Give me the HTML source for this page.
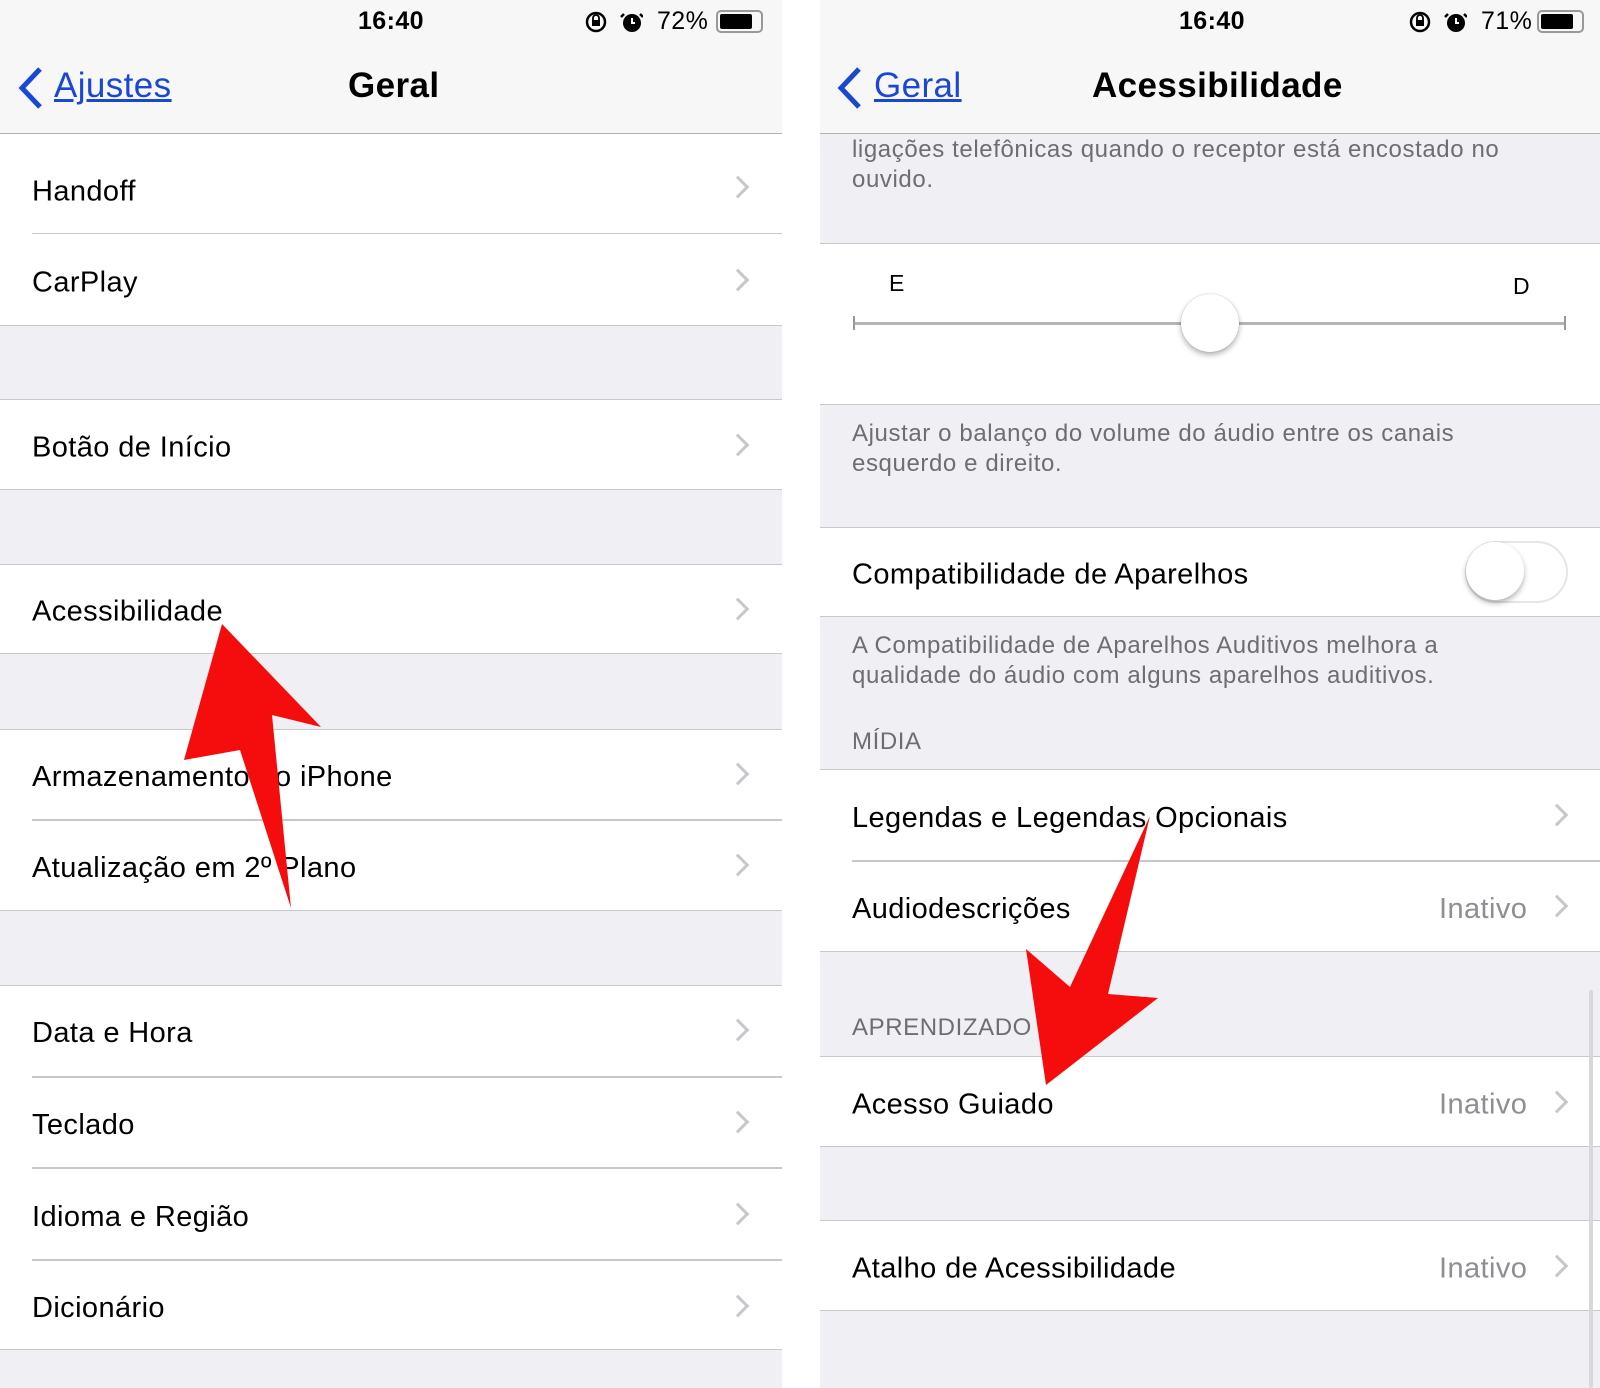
<!DOCTYPE html>
<html><head><meta charset="utf-8"><style>
*{margin:0;padding:0;box-sizing:border-box}
body{width:1600px;height:1388px;background:#fff;position:relative;overflow:hidden;font-family:"Liberation Sans",sans-serif;color:#000;letter-spacing:0.4px}
.a{position:absolute}
.gray{background:#efeff4}
.row{position:absolute;background:#fff;font-size:29px;border-bottom:1.5px solid #c8c7cc}
.row span{position:absolute;top:calc(50% + 3px);transform:translateY(-50%)}
.chev{position:absolute;width:16px;height:16px;border-right:3px solid #c7c7cc;border-top:3px solid #c7c7cc;transform:translateY(-50%) rotate(45deg)}
.ft{position:absolute;font-size:24px;color:#6d6d72;line-height:30px;letter-spacing:0.6px}
.line{position:absolute;height:1.5px;background:#c8c7cc}
</style></head><body>
<!-- LEFT -->
<div class="a gray" style="left:0;top:0;width:782px;height:1388px"></div>
<div class="a" style="left:0;top:0;width:782px;height:134px;background:#f7f7f7;border-bottom:1.5px solid #b2b2b2"></div>
<div class="a" style="left:358px;top:7px;font-size:25px;font-weight:bold">16:40</div>
<svg class="a" style="left:583px;top:9px" width="60" height="26"><circle cx="13" cy="13" r="9" fill="none" stroke="#000" stroke-width="2.5"/><rect x="9" y="11" width="8" height="6" fill="#000"/><path d="M10 11 v-2 a3 3 0 0 1 6 0 v2" fill="none" stroke="#000" stroke-width="1.8"/><circle cx="49" cy="14" r="9" fill="#000"/><path d="M41 5 l-3 3 M57 5 l3 3" stroke="#000" stroke-width="2.5"/><path d="M49 9 v5 h3" stroke="#fff" stroke-width="2" fill="none"/></svg>
<div class="a" style="left:657px;top:7px;font-size:25px">72%</div>
<div class="a" style="left:716px;top:10px;width:47px;height:23px;border:2px solid #999;border-radius:5px"><div style="margin:2px;width:32px;height:15px;background:#000;border-radius:2px"></div></div>
<svg class="a" style="left:16px;top:66px" width="30" height="44"><path d="M24 3 L6 22 L24 41" stroke="#1a47d4" stroke-width="5" fill="none"/></svg>
<div class="a" style="left:54px;top:66px;font-size:35px;color:#1a47d4;text-decoration:underline">Ajustes</div>
<div class="a" style="left:348px;top:66px;font-size:35px;font-weight:bold">Geral</div>

<div class="row" style="left:0;top:134px;width:782px;height:100px;border:none"><span style="left:32px;top:calc(50% + 8px)">Handoff</span><i class="chev" style="left:730px;top:53%"></i></div>
<div class="line" style="left:32px;top:233px;width:750px"></div>
<div class="row" style="left:0;top:234px;width:782px;height:92px"><span style="left:32px">CarPlay</span><i class="chev" style="left:730px;top:50%"></i></div>
<div class="row" style="left:0;top:399px;width:782px;height:91px;border-top:1.5px solid #c8c7cc"><span style="left:32px">Botão de Início</span><i class="chev" style="left:730px;top:50%"></i></div>
<div class="row" style="left:0;top:564px;width:782px;height:90px;border-top:1.5px solid #c8c7cc"><span style="left:32px">Acessibilidade</span><i class="chev" style="left:730px;top:50%"></i></div>
<div class="row" style="left:0;top:729px;width:782px;height:182px;border-top:1.5px solid #c8c7cc"></div>
<div class="a" style="left:32px;top:761px;font-size:29px">Armazenamento do iPhone</div>
<i class="chev" style="left:730px;top:774px"></i>
<div class="line" style="left:32px;top:819px;width:750px"></div>
<div class="a" style="left:32px;top:852px;font-size:29px">Atualização em 2º Plano</div>
<i class="chev" style="left:730px;top:865px"></i>
<div class="row" style="left:0;top:985px;width:782px;height:365px;border-top:1.5px solid #c8c7cc"></div>
<div class="a" style="left:32px;top:1017px;font-size:29px">Data e Hora</div><i class="chev" style="left:730px;top:1030px"></i>
<div class="line" style="left:32px;top:1076px;width:750px"></div>
<div class="a" style="left:32px;top:1109px;font-size:29px">Teclado</div><i class="chev" style="left:730px;top:1122px"></i>
<div class="line" style="left:32px;top:1167px;width:750px"></div>
<div class="a" style="left:32px;top:1201px;font-size:29px">Idioma e Região</div><i class="chev" style="left:730px;top:1214px"></i>
<div class="line" style="left:32px;top:1259px;width:750px"></div>
<div class="a" style="left:32px;top:1292px;font-size:29px">Dicionário</div><i class="chev" style="left:730px;top:1306px"></i>

<!-- RIGHT -->
<div class="a gray" style="left:820px;top:0;width:780px;height:1388px"></div>
<div class="a" style="left:820px;top:0;width:780px;height:134px;background:#f7f7f7;border-bottom:1.5px solid #b2b2b2"></div>
<div class="a" style="left:1179px;top:7px;font-size:25px;font-weight:bold">16:40</div>
<svg class="a" style="left:1407px;top:9px" width="60" height="26"><circle cx="13" cy="13" r="9" fill="none" stroke="#000" stroke-width="2.5"/><rect x="9" y="11" width="8" height="6" fill="#000"/><path d="M10 11 v-2 a3 3 0 0 1 6 0 v2" fill="none" stroke="#000" stroke-width="1.8"/><circle cx="49" cy="14" r="9" fill="#000"/><path d="M41 5 l-3 3 M57 5 l3 3" stroke="#000" stroke-width="2.5"/><path d="M49 9 v5 h3" stroke="#fff" stroke-width="2" fill="none"/></svg>
<div class="a" style="left:1481px;top:7px;font-size:25px">71%</div>
<div class="a" style="left:1537px;top:10px;width:47px;height:23px;border:2px solid #999;border-radius:5px"><div style="margin:2px;width:32px;height:15px;background:#000;border-radius:2px"></div></div>
<svg class="a" style="left:835px;top:66px" width="30" height="44"><path d="M24 3 L6 22 L24 41" stroke="#1a47d4" stroke-width="5" fill="none"/></svg>
<div class="a" style="left:874px;top:66px;font-size:35px;color:#1a47d4;text-decoration:underline">Geral</div>
<div class="a" style="left:1092px;top:66px;font-size:35px;font-weight:bold">Acessibilidade</div>
<div class="ft" style="left:852px;top:135px">ligações telefônicas quando o receptor está encostado no<br>ouvido.</div>
<div class="row" style="left:820px;top:243px;width:780px;height:162px;border-top:1.5px solid #c8c7cc"></div>
<div class="a" style="left:889px;top:270px;font-size:23px">E</div>
<div class="a" style="left:1513px;top:273px;font-size:23px">D</div>
<div class="a" style="left:854px;top:322px;width:711px;height:3px;background:#b5b5b5"></div>
<div class="a" style="left:853px;top:316px;width:2px;height:14px;background:#999"></div>
<div class="a" style="left:1564px;top:316px;width:2px;height:14px;background:#999"></div>
<div class="a" style="left:1181px;top:294px;width:58px;height:58px;border-radius:50%;background:#fff;box-shadow:0 3px 6px rgba(0,0,0,.3),0 0 1px rgba(0,0,0,.3)"></div>
<div class="ft" style="left:852px;top:419px">Ajustar o balanço do volume do áudio entre os canais<br>esquerdo e direito.</div>
<div class="row" style="left:820px;top:527px;width:780px;height:90px;border-top:1.5px solid #c8c7cc"><span style="left:32px">Compatibilidade de Aparelhos</span></div>
<div class="a" style="left:1465px;top:541px;width:103px;height:62px;border-radius:31px;border:2px solid #e5e5ea;background:#fff"></div>
<div class="a" style="left:1466px;top:542px;width:58px;height:58px;border-radius:50%;background:#fff;box-shadow:0 3px 6px rgba(0,0,0,.3)"></div>
<div class="ft" style="left:852px;top:631px">A Compatibilidade de Aparelhos Auditivos melhora a<br>qualidade do áudio com alguns aparelhos auditivos.</div>
<div class="ft" style="left:852px;top:727px">MÍDIA</div>
<div class="row" style="left:820px;top:769px;width:780px;height:183px;border-top:1.5px solid #c8c7cc"></div>
<div class="a" style="left:852px;top:802px;font-size:29px">Legendas e Legendas Opcionais</div><i class="chev" style="left:1549px;top:815px"></i>
<div class="line" style="left:852px;top:860px;width:748px"></div>
<div class="a" style="left:852px;top:893px;font-size:29px">Audiodescrições</div>
<div class="a" style="left:1439px;top:893px;font-size:29px;color:#8e8e93">Inativo</div><i class="chev" style="left:1549px;top:906px"></i>
<div class="ft" style="left:852px;top:1013px">APRENDIZADO</div>
<div class="row" style="left:820px;top:1056px;width:780px;height:91px;border-top:1.5px solid #c8c7cc"><span style="left:32px">Acesso Guiado</span><span style="left:619px;color:#8e8e93">Inativo</span><i class="chev" style="left:729px;top:50%"></i></div>
<div class="row" style="left:820px;top:1220px;width:780px;height:91px;border-top:1.5px solid #c8c7cc"><span style="left:32px">Atalho de Acessibilidade</span><span style="left:619px;color:#8e8e93">Inativo</span><i class="chev" style="left:729px;top:50%"></i></div>
<div class="a" style="left:1589px;top:990px;width:4px;height:398px;background:#d8d8dc;border-radius:2px"></div>

<!-- arrows -->
<svg class="a" style="left:0;top:0" width="1600" height="1388">
<polygon points="222,624 321,727 272,715 291,908 240,750 184,760" fill="#f50d0d"/>
<polygon points="1150,816 1108,994 1158,998 1046,1085 1026,949 1070,987" fill="#f50d0d"/>
</svg>
</body></html>
